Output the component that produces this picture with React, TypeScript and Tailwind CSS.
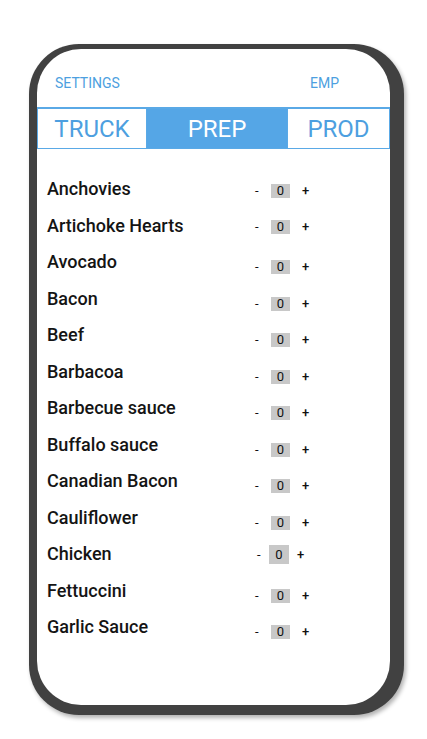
import React from "react";

type Item = { name: string; ctrl: string; box: string; plus: string; minus: string };

const std = { ctrl: "mt-[8px]", box: "w-[19px] h-[14px]", plus: "ml-[12px]", minus: "w-[16px]" };

const items: Item[] = [
  { name: "Anchovies", ctrl: "mt-[5px]", box: "w-[19px] h-[14px]", plus: "ml-[12px]", minus: "w-[16px]" },
  { name: "Artichoke Hearts", ctrl: "mt-[4px]", box: "w-[19px] h-[14px]", plus: "ml-[12px]", minus: "w-[16px]" },
  { name: "Avocado", ...std },
  { name: "Bacon", ...std },
  { name: "Beef", ...std },
  { name: "Barbacoa", ...std },
  { name: "Barbecue sauce", ...std },
  { name: "Buffalo sauce", ...std },
  { name: "Canadian Bacon", ...std },
  { name: "Cauliflower", ...std },
  { name: "Chicken", ctrl: "mt-[1px]", box: "w-[20px] h-[19px]", plus: "ml-[8px]", minus: "w-[14px] pl-[2px]" },
  { name: "Fettuccini", ...std },
  { name: "Garlic Sauce", ...std },
];

export default function App() {
  return (
    <div
      className="w-[427px] h-[739px] bg-white pt-[44px] pl-[29px]"
      style={{ fontFamily: "Roboto, 'Noto Sans', sans-serif" }}
    >
      <div className="w-[375px] h-[671px] rounded-[50px] bg-[#414141] pt-[5px] pl-[8px] pr-[14px] pb-[10px] shadow-[2px_3px_4px_rgba(0,0,0,0.3)]">
        <div className="h-full rounded-[44px] bg-white flex flex-col overflow-hidden">
          <div className="h-[58px] flex items-start pt-[26px] pl-[18px] pr-[51px] justify-between text-[14px] leading-[16px] text-[#4d9fe0]">
            <span>SETTINGS</span>
            <span>EMP</span>
          </div>
          <div className="flex h-[42px] border border-t-2 border-[#5aa9e6] text-[24px] leading-[28px]">
            <div className="w-[109px] flex items-center justify-center text-[#4d9fe0] border-r border-[#5aa9e6]">
              TRUCK
            </div>
            <div className="w-[140px] flex items-center justify-center bg-[#55a6e6] text-white">
              PREP
            </div>
            <div className="flex-1 flex items-center justify-center text-[#4d9fe0] border-l border-[#5aa9e6]">
              PROD
            </div>
          </div>
          <div className="pt-[30px] pl-[10px] flex flex-col">
            {items.map((it) => (
              <div key={it.name} className="h-[36.5px] flex items-start">
                <div className="w-[208px] text-[18px] leading-[20px] font-medium text-[#141414]">
                  {it.name}
                </div>
                <div className={`flex items-center text-[13px] text-[#111] ${it.ctrl}`}>
                  <span className={`${it.minus} leading-[14px]`}>-</span>
                  <span className={`${it.box} bg-[#c8c8c8] flex items-center justify-center leading-[14px]`}>
                    0
                  </span>
                  <span className={`${it.plus} leading-[14px] font-medium`}>+</span>
                </div>
              </div>
            ))}
          </div>
        </div>
      </div>
    </div>
  );
}
